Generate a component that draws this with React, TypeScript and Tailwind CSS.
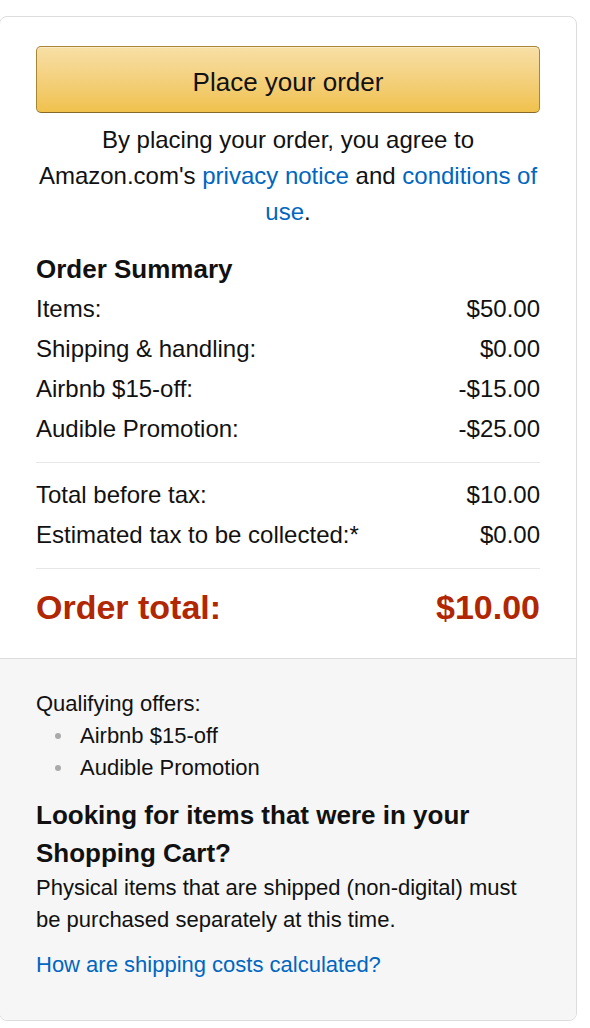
import React from "react";

const Row = ({ label, value }: { label: string; value: string }) => (
  <div className="flex h-[40px] items-center justify-between text-[24px] text-[#111]">
    <span>{label}</span>
    <span>{value}</span>
  </div>
);

export default function App() {
  return (
    <div className="min-h-[1028px] bg-white pt-[16px]" style={{ fontFamily: '"Liberation Sans", Arial, sans-serif' }}>
      <div className="ml-[-1px] w-[578px] overflow-hidden rounded-[8px] border border-[#dddddd] bg-white">
        <div className="px-[36px] pt-[29px] pb-[31px]">
          <button className="flex h-[67px] w-full items-center justify-center rounded-[5px] border border-[#a88734] border-b-[#846a29] bg-gradient-to-b from-[#f7dfa5] to-[#f0c14b] pt-[6px] text-[26px] text-[#111] shadow-[inset_0_1px_0_rgba(255,255,255,0.4)]">
            Place your order
          </button>
          <p className="mt-[9px] text-center text-[24px] leading-[36px] text-[#111]">
            By placing your order, you agree to
            <br />
            Amazon.com's <span className="text-[#0066c0]">privacy notice</span> and{" "}
            <span className="text-[#0066c0]">conditions of</span>
            <br />
            <span className="text-[#0066c0]">use</span>.
          </p>
          <div className="mt-[19px] flex h-[40px] items-center text-[26px] font-bold text-[#111]">Order Summary</div>
          <Row label="Items:" value="$50.00" />
          <Row label="Shipping & handling:" value="$0.00" />
          <Row label="Airbnb $15-off:" value="-$15.00" />
          <Row label="Audible Promotion:" value="-$25.00" />
          <div className="mt-[13px] h-px bg-[#e7e7e7]" />
          <div className="mt-[12px]">
            <Row label="Total before tax:" value="$10.00" />
            <Row label="Estimated tax to be collected:*" value="$0.00" />
          </div>
          <div className="mt-[13px] h-px bg-[#e7e7e7]" />
          <div className="mt-[18px] flex h-[40px] items-center justify-between text-[34px] font-bold text-[#b12704]">
            <span>Order total:</span>
            <span>$10.00</span>
          </div>
        </div>
        <div className="border-t border-[#dddddd] bg-[#f6f6f6] px-[36px] pt-[29px] pb-[39px]">
          <div className="text-[22px] leading-[32px] text-[#111]">Qualifying offers:</div>
          <ul className="text-[22px] leading-[32px] text-[#111]">
            {["Airbnb $15-off", "Audible Promotion"].map((t) => (
              <li key={t} className="flex items-center">
                <span className="ml-[19px] mr-[19px] h-[6px] w-[6px] rounded-full bg-[#aaaaaa]" />
                <span>{t}</span>
              </li>
            ))}
          </ul>
          <h3 className="mt-[12px] text-[26px] font-bold leading-[38px] text-[#111]">
            Looking for items that were in your Shopping Cart?
          </h3>
          <p className="text-[22px] leading-[32px] text-[#111]">
            Physical items that are shipped (non-digital) must
            <br />
            be purchased separately at this time.
          </p>
          <div className="mt-[13px] text-[22px] leading-[32px] text-[#0066c0]">How are shipping costs calculated?</div>
        </div>
      </div>
    </div>
  );
}
